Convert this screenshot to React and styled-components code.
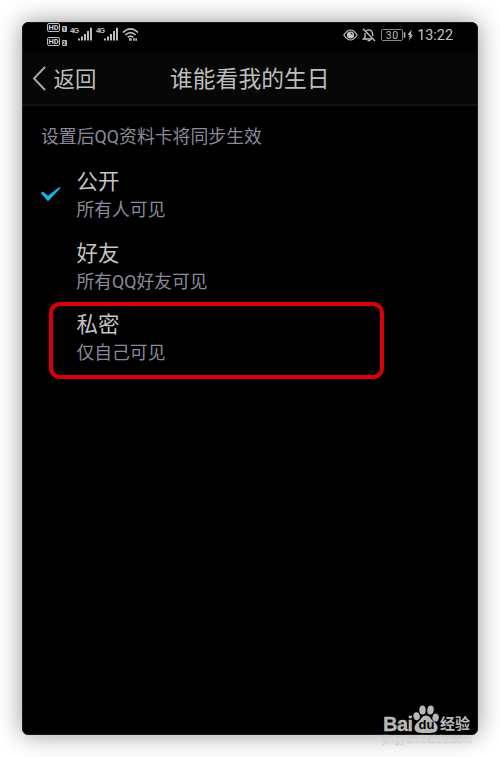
import React from "react";
import styled, { createGlobalStyle } from "styled-components";

const GlobalStyle = createGlobalStyle`
  * { box-sizing: border-box; }
  body { margin: 0; background: #fff; overflow: hidden; }
`;

const Stage = styled.main`
  width: 500px;
  height: 757px;
  padding: 22px;
  overflow: hidden;
  background: #fff;
  font-family: Roboto, "Noto Sans CJK SC", sans-serif;
`;

const Phone = styled.div`
  position: relative;
  display: flex;
  flex-direction: column;
  width: 456px;
  height: 713px;
  border: 1px solid #1c1c1c;
  border-radius: 6px;
  background: #000;
  box-shadow: 0 0 24px rgba(0, 0, 0, 0.42);
`;

const StatusBar = styled.header`
  display: flex;
  justify-content: space-between;
  height: 29px;
  padding: 0 24px 0 24px;
  flex: none;
`;

const StatusGroup = styled.div`
  display: flex;
  align-items: center;
  height: 23px;
`;

const HdStack = styled.div`
  display: flex;
  flex-direction: column;
  gap: 5px;
  width: 20px;
  margin-right: 3px;
`;

const HdRow = styled.div`
  display: flex;
  align-items: flex-end;
  gap: 1.5px;
`;

const HdTag = styled.span`
  width: 13px;
  height: 9px;
  border: 1px solid #bdbdbd;
  border-radius: 2px;
  color: #d6d6d6;
  font-size: 7.5px;
  font-weight: 700;
  line-height: 7.5px;
  text-align: center;
`;

const SimTag = styled.span`
  width: 5px;
  height: 6px;
  border-radius: 1px;
  background: #bcbcbc;
  color: #000;
  font-size: 5.5px;
  font-weight: 700;
  line-height: 6px;
  text-align: center;
`;

const SignalBox = styled.div`
  display: flex;
  width: 26px;
  height: 15px;
`;

const SignalLabel = styled.span`
  width: 7px;
  color: #c4c4c4;
  font-family: "Liberation Sans", sans-serif;
  font-size: 7.5px;
  font-weight: 700;
  letter-spacing: -1px;
  line-height: 8px;
`;

const Clock = styled.time`
  padding-top: 2px;
  color: #c6c6c6;
  font-size: 14.4px;
  line-height: 20px;
`;

const Battery = styled.span`
  width: 22px;
  height: 12px;
  margin-left: 5px;
  border: 1px solid #858585;
  border-radius: 2px;
  color: #bcbcbc;
  font-size: 10.5px;
  line-height: 11px;
  letter-spacing: 0.4px;
  text-align: center;
`;

const Icon = styled.svg`
  display: block;
  flex: none;
  margin-left: ${(p) => p.$gap || 0}px;
`;

const TitleBar = styled.nav`
  display: grid;
  grid-template-columns: 147px 1fr;
  align-items: center;
  height: 54px;
  flex: none;
  border-top: 1px solid #030303;
  border-bottom: 2px solid #131313;
  background: #070707;
`;

const BackButton = styled.button`
  display: flex;
  align-items: center;
  gap: 6.5px;
  padding: 0 0 0 9px;
  border: 0;
  background: none;
  color: #bdbdbd;
  font: inherit;
  font-size: 21.4px;
  line-height: 30px;
`;

const BackLabel = styled.span`
  padding-top: 2px;
`;

const Title = styled.h1`
  margin: 0;
  padding-top: 3px;
  color: #bdbdbd;
  font-size: 22.8px;
  font-weight: 400;
  line-height: 30px;
`;

const Hint = styled.p`
  margin: 0;
  padding: 18px 0 0 18px;
  color: #8a8a99;
  font-size: 17.85px;
  line-height: 26px;
`;

const OptionList = styled.ul`
  margin: 16px 0 0;
  padding: 0;
  list-style: none;
`;

const Option = styled.li`
  position: relative;
  display: grid;
  grid-template-columns: 53.5px 1fr;
  height: 71.5px;
`;

const CheckCell = styled.div`
  padding: 20px 0 0 17px;
`;

const OptionName = styled.div`
  color: #c4c4c4;
  font-size: 21.4px;
  line-height: 32px;
`;

const OptionNote = styled.div`
  color: #8a8a99;
  font-size: 17.8px;
  line-height: 24px;
`;

const Highlight = styled.div`
  position: absolute;
  top: -7.5px;
  left: 26px;
  width: 335px;
  height: 77px;
  border: 4px solid #d9000a;
  border-radius: 11px;
`;

const Watermark = styled.div`
  position: absolute;
  left: 360px;
  top: 680px;
  width: 95px;
  color: #b9b9b9;
`;

const Brand = styled.div`
  display: flex;
  align-items: flex-end;
  height: 31px;
`;

const BrandLatin = styled.span`
  width: 30px;
  margin-bottom: -2px;
  font-family: "Liberation Sans", sans-serif;
  font-size: 20px;
  font-weight: 700;
  letter-spacing: -0.5px;
  line-height: 24px;
  -webkit-text-stroke: 0.3px #b9b9b9;
`;

const BrandHan = styled.span`
  margin-left: 1px;
  margin-bottom: -2px;
  font-size: 15px;
  font-weight: 700;
  line-height: 24px;
`;

const Site = styled.div`
  margin-top: 0;
  color: #f2f2f2;
  font-family: "Liberation Sans", sans-serif;
  font-size: 10.4px;
  letter-spacing: 0.3px;
  line-height: 12px;
  -webkit-text-stroke: 0.4px #c4c4c4;
`;

function Signal() {
  return (
    <SignalBox>
      <SignalLabel>4G</SignalLabel>
      <svg width="16" height="15" fill="#bdbdbd">
        <path d="M1 11.500h2v2H1zM4 9.500h2v4H4zM7 7h2v6.500H7zM10 4h2v9.500h-2zM13 .7h2v12.800h-2z" />
      </svg>
    </SignalBox>
  );
}

function Paw() {
  return (
    <svg width="26" height="29" viewBox="0 0 26 29">
      <g fill="#b9b9b9">
        <ellipse cx="9.500" cy="5" rx="3.200" ry="4.500" />
        <ellipse cx="17.500" cy="5" rx="3.200" ry="4.500" transform="rotate(8 17.500 5)" />
        <ellipse cx="3.600" cy="11.200" rx="3.200" ry="4" transform="rotate(-12 3.600 11.200)" />
        <ellipse cx="22.600" cy="12.600" rx="3.200" ry="4" transform="rotate(10 22.600 12.600)" />
        <path d="M13 10.500c3.500 0 4.500 3 6.500 5 2.500 2 6 4.500 5 8.500-1 4-5 4-11.500 4S2.500 28 1.600 24c-.7-3.700 2.500-6 5-8.500 2-2 2.900-5 6.400-5z" />
      </g>
      <text x="5.500" y="24" fill="#000" fontFamily="Liberation Sans" fontWeight="700" fontSize="13">du</text>
    </svg>
  );
}

const options = [
  { name: "公开", note: "所有人可见", checked: true },
  { name: "好友", note: "所有QQ好友可见" },
  { name: "私密", note: "仅自己可见", highlighted: true },
];

export default function App() {
  return (
    <Stage>
      <GlobalStyle />
      <Phone>
        <StatusBar>
          <StatusGroup>
            <HdStack>
              <HdRow><HdTag>HD</HdTag><SimTag>1</SimTag></HdRow>
              <HdRow><HdTag>HD</HdTag><SimTag>2</SimTag></HdRow>
            </HdStack>
            <Signal />
            <Signal />
            <Icon width="17" height="15" fill="none" stroke="#bdbdbd" strokeWidth="1.700">
              <path d="M1 5.500Q8.500-1.800 16 5.500M3.300 8Q8.500 3.200 13.700 8M5.700 10.300Q8.500 7.800 11.300 10.300" />
              <path d="M7 12.500h2.700M11 12.500h1.700M13.300 12.500H15" strokeWidth="2.400" />
            </Icon>
          </StatusGroup>
          <StatusGroup>
            <Icon width="15" height="12" fill="none" stroke="#c4c4c4" strokeWidth="1.200">
              <path d="M.8 6Q7.500-4 14.200 6 7.500 16 .8 6z" />
              <circle cx="7.500" cy="6" r="3.600" fill="#c4c4c4" stroke="none" />
              <path d="M7.500 4a2 2 0 0 1 1.700 1.700" stroke="#000" strokeWidth="1" />
            </Icon>
            <Icon $gap={4} width="14" height="14" fill="none" stroke="#c4c4c4" strokeWidth="1.300">
              <path d="M1 .8 13 13M4.300 2.800Q7 .8 9.500 3 10.700 4.200 10.700 8M3 5v4.500L1.500 11h8.500M5.500 12.700h3" />
            </Icon>
            <Battery>30</Battery>
            <Icon width="14" height="14" fill="#bdbdbd">
              <path d="M.8 4.300h1.500v5.500H.8zM8.500 1.500 4.500 7H7L6 8.500H4.500L7 9l-1.500 4L10 7.300H8l.8-1.300H10L8 5.700z" />
            </Icon>
            <Clock>13:22</Clock>
          </StatusGroup>
        </StatusBar>
        <TitleBar>
          <BackButton>
            <svg width="15" height="26" fill="none" stroke="#aaa" strokeWidth="1.900">
              <path d="M13 1 2 12.500l11 11.500" />
            </svg>
            <BackLabel>返回</BackLabel>
          </BackButton>
          <Title>谁能看我的生日</Title>
        </TitleBar>
        <Hint>设置后QQ资料卡将同步生效</Hint>
        <OptionList>
          {options.map((option) => (
            <Option key={option.name}>
              <CheckCell>
                {option.checked && (
                  <svg width="21" height="16">
                    <path d="M.8 7 8 15.200 20.500 2 19.500 1 8 9.800 2.800 5.500z" fill="#18b4f2" />
                  </svg>
                )}
              </CheckCell>
              <div>
                <OptionName>{option.name}</OptionName>
                <OptionNote>{option.note}</OptionNote>
              </div>
              {option.highlighted && <Highlight />}
            </Option>
          ))}
        </OptionList>
        <Watermark>
          <Brand>
            <BrandLatin>Bai</BrandLatin>
            <Paw />
            <BrandHan>经验</BrandHan>
          </Brand>
          <Site>jingyan.baidu.com</Site>
        </Watermark>
      </Phone>
    </Stage>
  );
}
